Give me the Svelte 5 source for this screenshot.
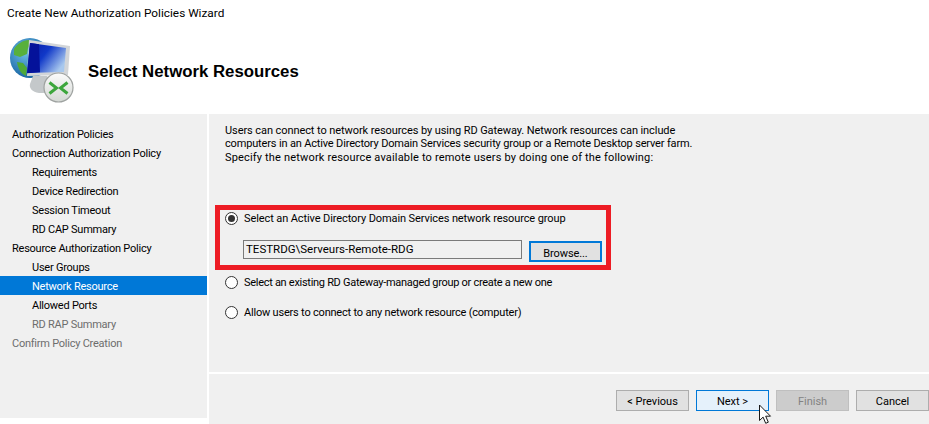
<script>
  const steps = [
    { t: 'Authorization Policies' },
    { t: 'Connection Authorization Policy' },
    { t: 'Requirements', sub: true },
    { t: 'Device Redirection', sub: true },
    { t: 'Session Timeout', sub: true },
    { t: 'RD CAP Summary', sub: true },
    { t: 'Resource Authorization Policy' },
    { t: 'User Groups', sub: true },
    { t: 'Network Resource', sub: true, active: true },
    { t: 'Allowed Ports', sub: true },
    { t: 'RD RAP Summary', sub: true, off: true },
    { t: 'Confirm Policy Creation', off: true }
  ];
</script>

<div class="wizard">
  <div class="title">Create New Authorization Policies Wizard</div>
  <header class="head">
    <svg class="logo" width="66" height="66" viewBox="0 0 66 66">
      <defs>
        <radialGradient id="globe" cx="0.4" cy="0.35" r="0.7">
          <stop offset="0" stop-color="#6fc0ea" />
          <stop offset="1" stop-color="#14609f" />
        </radialGradient>
        <linearGradient id="screen" x1="0" y1="0" x2="1" y2="0.6">
          <stop offset="0" stop-color="#0816a0" />
          <stop offset="0.5" stop-color="#1038c8" />
          <stop offset="1" stop-color="#a8c8ee" />
        </linearGradient>
        <linearGradient id="badge" x1="0" y1="0" x2="0" y2="1">
          <stop offset="0" stop-color="#fbfbfb" />
          <stop offset="1" stop-color="#d4d8d4" />
        </linearGradient>
      </defs>
      <circle cx="21" cy="20" r="20" fill="url(#globe)" />
      <path d="M5 11c3-5 9-9 15-9l3 3-4 5-1 6-7 3-6-2z" fill="#58b03c" />
      <path d="M8 24l6 1 4 5-1 8c-5-2-8-7-9-14z" fill="#4ea838" />
      <path d="M24 38h14l6 10-6 7h-8c-7-1-10-5-9-9z" fill="#c4c8ca" />
      <path d="M20 2l41 6-2 29-41 1z" fill="#d2d5d8" />
      <path d="M21 5l36 5-2 24-37 1z" fill="url(#screen)" />
      <path d="M21 5l9 1.300 1 28-13 1z" fill="#04129a" />
      <circle cx="49.500" cy="49.500" r="14.500" fill="url(#badge)" stroke="#9ea2a0" stroke-width="1.200" />
      <path d="M40.500 44.500l7 5.500-7 5.500M58.500 44.500l-7 5.500 7 5.500" fill="none" stroke="#3ca63c" stroke-width="3" />
    </svg>
    <h1>Select Network Resources</h1>
  </header>

  <div class="body">
    <nav class="side">
      {#each steps as s}
        <div class="step" class:sub={s.sub} class:active={s.active} class:off={s.off}>{s.t}</div>
      {/each}
    </nav>

    <main class="main">
      <div class="pane">
        <div class="intro">
          <div class="l1">Users can connect to network resources by using RD Gateway. Network resources can include</div>
          <div class="l2">computers in an Active Directory Domain Services security group or a Remote Desktop server farm.</div>
          <div class="l3">Specify the network resource available to remote users by doing one of the following:</div>
        </div>

        <div class="marked">
          <label class="option">
            <span class="radio checked"></span>
            <span>Select an Active Directory Domain Services network resource group</span>
          </label>
          <div class="pick">
            <div class="field">TESTRDG\Serveurs-Remote-RDG</div>
            <button class="btn browse">Browse...</button>
          </div>
        </div>

        <label class="option second">
          <span class="radio"></span>
          <span>Select an existing RD Gateway-managed group or create a new one</span>
        </label>
        <label class="option third">
          <span class="radio"></span>
          <span>Allow users to connect to any network resource (computer)</span>
        </label>
      </div>

      <footer class="foot">
        <button class="btn">&lt; Previous</button>
        <button class="btn next">Next &gt;</button>
        <button class="btn dis">Finish</button>
        <button class="btn">Cancel</button>
        <svg class="cursor" width="14" height="21" viewBox="0 0 14 21">
          <path d="M1.500 1v15.500l3.600-3.400 2.600 6.200 2.600-1.100-2.600-6h4.800z" fill="#fff" stroke="#1a1a1a" stroke-width="1" />
        </svg>
      </footer>
    </main>
  </div>
</div>

<style>
  :global(body) {
    margin: 0;
    background: #fff;
    overflow: hidden;
  }
  .wizard {
    width: 929px;
    height: 424px;
    display: flex;
    flex-direction: column;
    font: 11px/19px Roboto, sans-serif;
    letter-spacing: -0.1px;
    color: #000;
    overflow: hidden;
  }
  .title {
    height: 26px;
    padding: 4px 0 0 7px;
    box-sizing: border-box;
    font-size: 11.800px;
    letter-spacing: 0;
    line-height: 19px;
  }
  .head {
    height: 88px;
    display: flex;
    align-items: flex-start;
    padding: 12px 0 0 9px;
    box-sizing: border-box;
  }
  .logo {
    flex: none;
  }
  h1 {
    margin: 22px 0 0 13px;
    font: bold 16.800px/24px "Liberation Sans", sans-serif;
    letter-spacing: 0;
  }
  .body {
    height: 310px;
    display: flex;
    gap: 2px;
    align-items: flex-start;
  }
  .side {
    width: 207px;
    height: 304px;
    padding-top: 10px;
    box-sizing: border-box;
    background: #f0f0f0;
    letter-spacing: -0.24px;
  }
  .step {
    height: 19px;
    line-height: 21px;
    padding-left: 12px;
  }
  .step.sub {
    padding-left: 32px;
  }
  .step.active {
    background: #0078d7;
    color: #fff;
  }
  .step.off {
    color: #6d6d6d;
  }
  .main {
    width: 720px;
    height: 310px;
    display: flex;
    flex-direction: column;
  }
  .pane {
    height: 258px;
    box-sizing: border-box;
    padding: 10px 0 0 6px;
    background: #f0f0f0;
  }
  .intro {
    height: 81px;
    margin-left: 10px;
    line-height: 13.300px;
  }
  .l1 {
    letter-spacing: -0.08px;
  }
  .l2 {
    letter-spacing: -0.16px;
  }
  .l3 {
    letter-spacing: 0.17px;
  }
  .marked {
    width: 396px;
    height: 65px;
    box-sizing: border-box;
    border: 5px solid #ed1c24;
    padding-left: 5px;
  }
  .option {
    display: flex;
    align-items: center;
    gap: 6px;
    height: 19px;
  }
  .marked .option {
    height: 16px;
  }
  .second {
    margin: 3px 0 0 10px;
    letter-spacing: -0.29px;
  }
  .third {
    margin: 11px 0 0 10px;
    letter-spacing: -0.2px;
  }
  .radio {
    flex: none;
    width: 13px;
    height: 13px;
    box-sizing: border-box;
    border: 1px solid #333;
    border-radius: 50%;
    background: #fff;
    display: grid;
    place-items: center;
  }
  .radio.checked::after {
    content: "";
    width: 7px;
    height: 7px;
    border-radius: 50%;
    background: #333;
  }
  .pick {
    display: flex;
    align-items: flex-start;
    gap: 7px;
    margin: 14px 0 0 18px;
  }
  .field {
    width: 279px;
    height: 19px;
    box-sizing: border-box;
    border: 1px solid #7a7a7a;
    background: #f0f0f0;
    padding-left: 2px;
    font-size: 11.500px;
    letter-spacing: 0;
    line-height: 17px;
  }
  .btn {
    width: 73px;
    height: 21px;
    box-sizing: border-box;
    border: 1px solid #adadad;
    border-radius: 0;
    background: #e1e1e1;
    color: #000;
    padding: 2px 0 0;
    font: inherit;
    letter-spacing: 0;
    line-height: 18px;
  }
  .browse {
    margin-top: 1px;
    border: 2px solid #0078d7;
    letter-spacing: -0.1px;
  }
  .foot {
    position: relative;
    flex: 1;
    margin-top: 2px;
    background: #f0f0f0;
    display: flex;
    gap: 7px;
    justify-content: flex-end;
    padding-top: 16px;
    box-sizing: border-box;
  }
  .next {
    background: #e5f1fb;
    border-color: #0078d7;
  }
  .dis {
    background: #cccccc;
    border-color: #bfbfbf;
    color: #838383;
  }
  .cursor {
    position: absolute;
    left: 549px;
    top: 30px;
  }
</style>
